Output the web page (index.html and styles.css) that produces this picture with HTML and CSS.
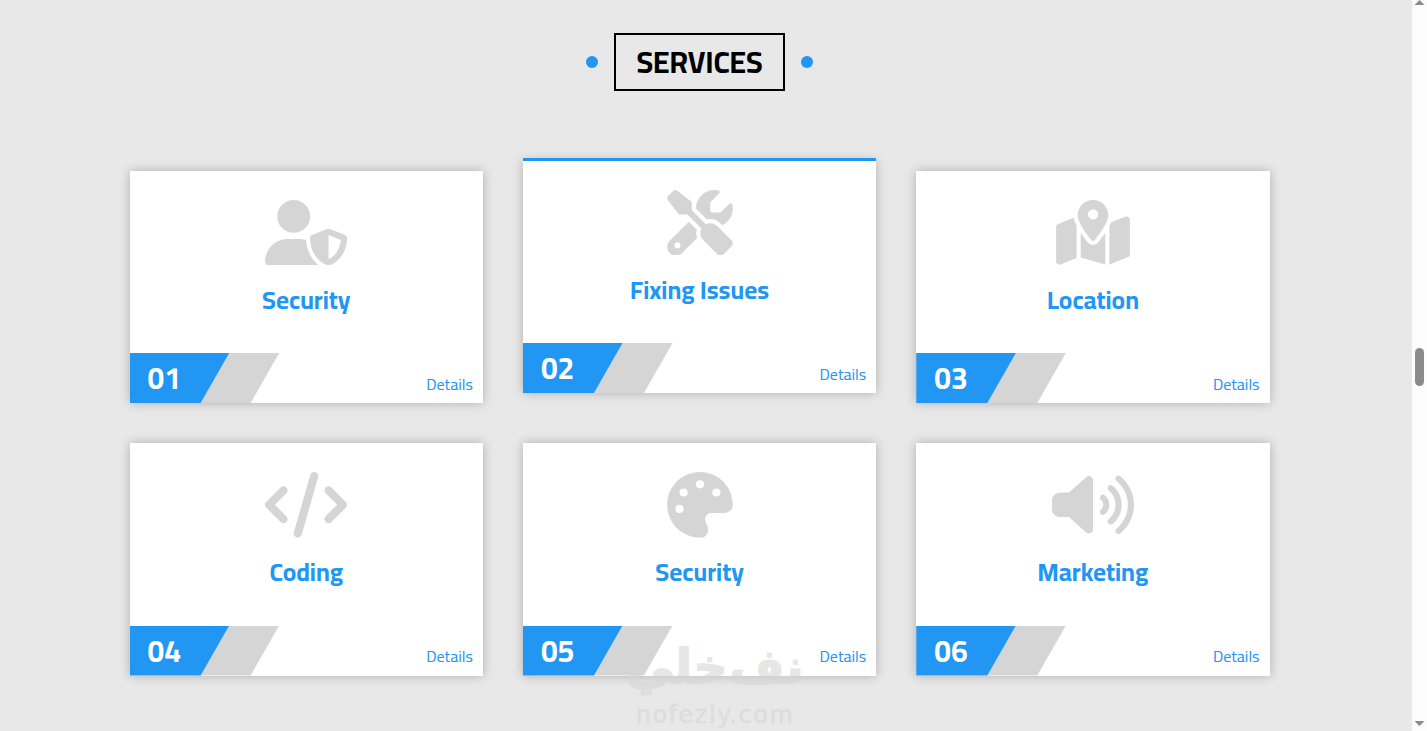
FILE: index.html
```html
<!DOCTYPE html>
<html lang="en">
<head>
  <meta charset="UTF-8">
  <meta name="viewport" content="width=device-width, initial-scale=1.0">
  <title>Services</title>
  <link rel="stylesheet" href="styles.css">
</head>
<body>

<div class="services" id="services">
  <h2 class="main-title">Services</h2>
  <div class="container">
    <div class="box">
      <svg class="icon" viewBox="0 0 640 512"><path d="M224 256A128 128 0 1 0 224 0a128 128 0 1 0 0 256zm-45.7 48C79.8 304 0 383.8 0 482.3C0 498.7 13.3 512 29.7 512H418.3c1.8 0 3.5-.2 5.3-.5c-76.3-55.1-99.8-141-103.1-200.2c-16.1-4.8-33.1-7.3-50.7-7.3H178.3zm308.8-78.3l-120 48C358 277.4 352 286.2 352 296c0 63.3 25.9 168.8 134.8 214.2c5.9 2.5 12.6 2.5 18.5 0C614.1 464.8 640 359.3 640 296c0-9.8-6-18.6-15.1-22.3l-120-48c-5.7-2.3-12.1-2.3-17.8 0zM591.4 312c-3.9 50.7-27.2 116.7-95.4 149.7V273.8L591.4 312z"/></svg>
      <h3>Security</h3>
      <div class="info">
        <span class="number">01</span>
        <a href="#">Details</a>
      </div>
    </div>
    <div class="box active">
      <svg class="icon" viewBox="-64 0 640 512"><path d="M78.6 5C69.1-2.4 55.6-1.5 47 7L7 47c-8.5 8.5-9.4 22-2.1 31.6l80 104c4.5 5.9 11.6 9.4 19 9.4h54.1l109 109c-14.7 29-10 65.4 14.3 89.6l112 112c12.5 12.5 32.8 12.5 45.3 0l64-64c12.5-12.5 12.5-32.8 0-45.3l-112-112c-24.2-24.2-60.6-29-89.6-14.3l-109-109V104c0-7.5-3.5-14.5-9.4-19L78.6 5zM19.9 396.1C7.2 408.8 0 426.1 0 444.1C0 481.6 30.4 512 67.9 512c18 0 35.3-7.2 48-19.9L233.7 374.3c-7.8-20.9-9-43.6-3.6-65.1l-61.7-61.7L19.9 396.1zM512 144c0-10.5-1.1-20.7-3.2-30.5c-2.4-11.2-16.1-14.1-24.2-6l-63.9 63.9c-3 3-7.1 4.7-11.3 4.7H352c-8.8 0-16-7.2-16-16V102.6c0-4.2 1.7-8.3 4.7-11.3l63.9-63.9c8.1-8.1 5.2-21.8-6-24.2C388.7 1.1 378.5 0 368 0C288.5 0 224 64.5 224 144l0 .8 85.3 85.3c36-9.1 75.8 .5 104 28.7L429 274.5c49-23 83-72.8 83-130.5zM56 432a24 24 0 1 1 48 0 24 24 0 1 1 -48 0z"/></svg>
      <h3>Fixing Issues</h3>
      <div class="info">
        <span class="number">02</span>
        <a href="#">Details</a>
      </div>
    </div>
    <div class="box">
      <svg class="icon" viewBox="-32 0 640 512"><path d="M408 120c0 54.6-73.1 151.9-105.2 192c-7.7 9.6-22 9.6-29.6 0C241.1 271.9 168 174.6 168 120C168 53.7 221.7 0 288 0s120 53.7 120 120zm8 80.4c3.5-6.9 6.7-13.8 9.6-20.6c.5-1.2 1-2.5 1.5-3.7l116-46.4C558.9 123.4 576 135 576 152V422.8c0 9.8-6 18.6-15.1 22.3L416 503V200.4zM137.6 138.3c2.4 14.1 7.2 28.3 12.8 41.5c2.9 6.8 6.1 13.7 9.6 20.6V451.8L32.9 502.7C17.1 509 0 497.4 0 480.4V209.6c0-9.8 6-18.6 15.1-22.3l122.6-49zM327.8 332c13.9-17.4 35.7-45.7 56.2-77V504.3L192 449.4V255c20.5 31.3 42.3 59.6 56.2 77c20.5 25.6 59.1 25.6 79.6 0zM288 152a40 40 0 1 0 0-80 40 40 0 1 0 0 80z"/></svg>
      <h3>Location</h3>
      <div class="info">
        <span class="number">03</span>
        <a href="#">Details</a>
      </div>
    </div>
    <div class="box">
      <svg class="icon" viewBox="0 0 640 512"><path d="M392.8 1.2c-17-4.9-34.7 5-39.6 22l-128 448c-4.9 17 5 34.7 22 39.6s34.7-5 39.6-22l128-448c4.9-17-5-34.7-22-39.6zm80.6 120.1c-12.5 12.5-12.5 32.8 0 45.3L562.7 256l-89.4 89.4c-12.5 12.5-12.5 32.8 0 45.3s32.8 12.5 45.3 0l112-112c12.5-12.5 12.5-32.8 0-45.3l-112-112c-12.5-12.5-32.8-12.5-45.3 0zm-306.7 0c-12.5-12.5-32.8-12.5-45.3 0l-112 112c-12.5 12.5-12.5 32.8 0 45.3l112 112c12.5 12.5 32.8 12.5 45.3 0s12.5-32.8 0-45.3L77.3 256l89.4-89.4c12.5-12.5 12.5-32.8 0-45.3z"/></svg>
      <h3>Coding</h3>
      <div class="info">
        <span class="number">04</span>
        <a href="#">Details</a>
      </div>
    </div>
    <div class="box">
      <svg class="icon" viewBox="-64 0 640 512"><path d="M512 256c0 .9 0 1.8 0 2.7c-.4 36.5-33.6 61.3-70.1 61.3H344c-26.5 0-48 21.5-48 48c0 3.4 .4 6.7 1 9.9c2.1 10.2 6.5 20 10.8 29.9c6.1 13.8 12.1 27.5 12.1 42c0 31.8-21.6 60.7-53.4 62c-3.5 .1-7 .2-10.6 .2C114.6 512 0 397.4 0 256S114.6 0 256 0S512 114.6 512 256zM128 288a32 32 0 1 0 -64 0 32 32 0 1 0 64 0zm0-96a32 32 0 1 0 0-64 32 32 0 1 0 0 64zM288 96a32 32 0 1 0 -64 0 32 32 0 1 0 64 0zm96 96a32 32 0 1 0 0-64 32 32 0 1 0 0 64z"/></svg>
      <h3>Security</h3>
      <div class="info">
        <span class="number">05</span>
        <a href="#">Details</a>
      </div>
    </div>
    <div class="box">
      <svg class="icon" viewBox="0 0 640 512"><path d="M533.6 32.5C598.5 85.3 640 165.8 640 256s-41.5 170.8-106.4 223.5c-10.3 8.4-25.4 6.8-33.8-3.5s-6.8-25.4 3.5-33.8C557.5 398.2 592 331.2 592 256s-34.5-142.2-88.7-186.3c-10.3-8.4-11.8-23.5-3.5-33.8s23.5-11.8 33.8-3.5zM473.1 107c43.2 35.2 70.9 88.9 70.9 149s-27.7 113.8-70.9 149c-10.3 8.4-25.4 6.8-33.8-3.5s-6.8-25.4 3.5-33.8C475.3 341.3 496 301.1 496 256s-20.7-85.3-53.2-111.8c-10.3-8.4-11.8-23.5-3.5-33.8s23.5-11.8 33.8-3.5zm-60.5 74.5C434.1 199.1 448 225.9 448 256s-13.9 56.9-35.4 74.5c-10.3 8.4-25.4 6.8-33.8-3.5s-6.8-25.4 3.5-33.8C393.1 284.4 400 271 400 256s-6.9-28.4-17.7-37.3c-10.3-8.4-11.8-23.5-3.5-33.8s23.5-11.8 33.8-3.5zM301.1 34.8C312.6 40 320 51.4 320 64V448c0 12.6-7.4 24-18.9 29.2s-25 3.1-34.4-5.3L131.8 352H64c-35.3 0-64-28.7-64-64V224c0-35.3 28.7-64 64-64h67.8L266.7 40.1c9.4-8.4 22.9-10.5 34.4-5.3z"/></svg>
      <h3>Marketing</h3>
      <div class="info">
        <span class="number">06</span>
        <a href="#">Details</a>
      </div>
    </div>
  </div>
  <div class="watermark">
    <span class="arabic" lang="ar" dir="rtl">نف خلي</span>
    <span class="domain">nofezly.com</span>
  </div>
</div>

<div class="scrollbar">
  <span class="arrow up"></span>
  <span class="thumb"></span>
  <span class="arrow down"></span>
</div>

</body>
</html>
```
FILE: styles.css
```css
* {
  box-sizing: border-box;
}

:root {
  --main-color: #2196f3;
  --gray-color: #d5d5d5;
}

body {
  display: flex;
  height: 731px;
  margin: 0;
  overflow: hidden;
  font-family: Cairo, "Open Sans", sans-serif;
  background-color: #fcfcfc;
}

.services {
  position: relative;
  width: 1412px;
  padding: 33px 142.4px 0 129.6px;
  background-color: #e8e8e8;
}

/* Section title */
.main-title {
  display: flex;
  align-items: center;
  justify-content: center;
  position: relative;
  width: 171px;
  height: 58px;
  margin: 0 auto 79.5px;
  border: 2px solid black;
  font-size: 30px;
  font-weight: 700;
  text-transform: uppercase;
}

.main-title::before,
.main-title::after {
  content: "";
  position: absolute;
  top: 21px;
  width: 12px;
  height: 12px;
  border-radius: 50%;
  background-color: var(--main-color);
}

.main-title::before {
  left: -30px;
}

.main-title::after {
  right: -30px;
}

/* Cards */
.container {
  display: grid;
  grid-template-columns: repeat(3, 1fr);
  gap: 40px;
}

.box {
  display: flex;
  flex-direction: column;
  align-items: center;
  position: relative;
  height: 232.5px;
  padding-top: 29px;
  background-color: white;
  box-shadow: 0 0 10px rgba(0, 0, 0, 0.25);
}

.box.active {
  top: -10px;
}

.box.active::before {
  content: "";
  position: absolute;
  left: 0;
  top: -3px;
  width: 100%;
  height: 3px;
  background-color: var(--main-color);
}

.icon {
  width: 82px;
  height: 65.6px;
  fill: var(--gray-color);
}

.box h3 {
  margin: 17.6px 0 0;
  font-size: 25px;
  line-height: 34px;
  font-weight: 700;
  color: var(--main-color);
}

.info {
  display: flex;
  justify-content: space-between;
  align-items: center;
  position: relative;
  width: 100%;
  height: 50px;
  margin-top: auto;
  padding: 0 10px 0 18px;
}

.info::before,
.info::after {
  content: "";
  position: absolute;
  left: 0;
  top: 0;
  height: 100%;
}

.info::before {
  width: 149.6px;
  background-color: var(--gray-color);
  clip-path: polygon(0 0, 100% 0, 121px 100%, 0 100%);
}

.info::after {
  width: 99.6px;
  background-color: var(--main-color);
  clip-path: polygon(0 0, 100% 0, 71px 100%, 0 100%);
}

.number {
  position: relative;
  z-index: 1;
  font-size: 30px;
  font-weight: 700;
  color: white;
}

.info a {
  margin-top: 11px;
  font-size: 16px;
  color: var(--main-color);
  text-decoration: none;
}

/* Site mark over the bottom row */
.watermark {
  display: flex;
  flex-direction: column;
  align-items: center;
  position: absolute;
  left: 629px;
  top: 632px;
  width: 172px;
  color: #d6d6d6;
  opacity: 0.6;
  white-space: nowrap;
}

.arabic {
  font-family: "DejaVu Sans", sans-serif;
  font-size: 47px;
  font-weight: 700;
  line-height: 69px;
  word-spacing: -14px;
  -webkit-text-stroke: 1.5px #d6d6d6;
}

.domain {
  font-family: "DejaVu Sans", sans-serif;
  font-size: 24px;
  line-height: 28px;
  letter-spacing: 1.5px;
  -webkit-text-stroke: 0.5px #d6d6d6;
}

/* Scrollbar */
.scrollbar {
  display: flex;
  flex-direction: column;
  align-items: center;
  flex: 1;
}

.arrow {
  width: 10px;
  height: 5px;
  background-color: #8b8b8b;
}

.up {
  clip-path: polygon(50% 0, 100% 100%, 0 100%);
}

.down {
  margin: auto 0 5px;
  clip-path: polygon(0 0, 100% 0, 50% 100%);
}

.thumb {
  width: 9px;
  height: 38px;
  margin-top: 343px;
  border-radius: 5px;
  background-color: #8b8b8b;
}
```
